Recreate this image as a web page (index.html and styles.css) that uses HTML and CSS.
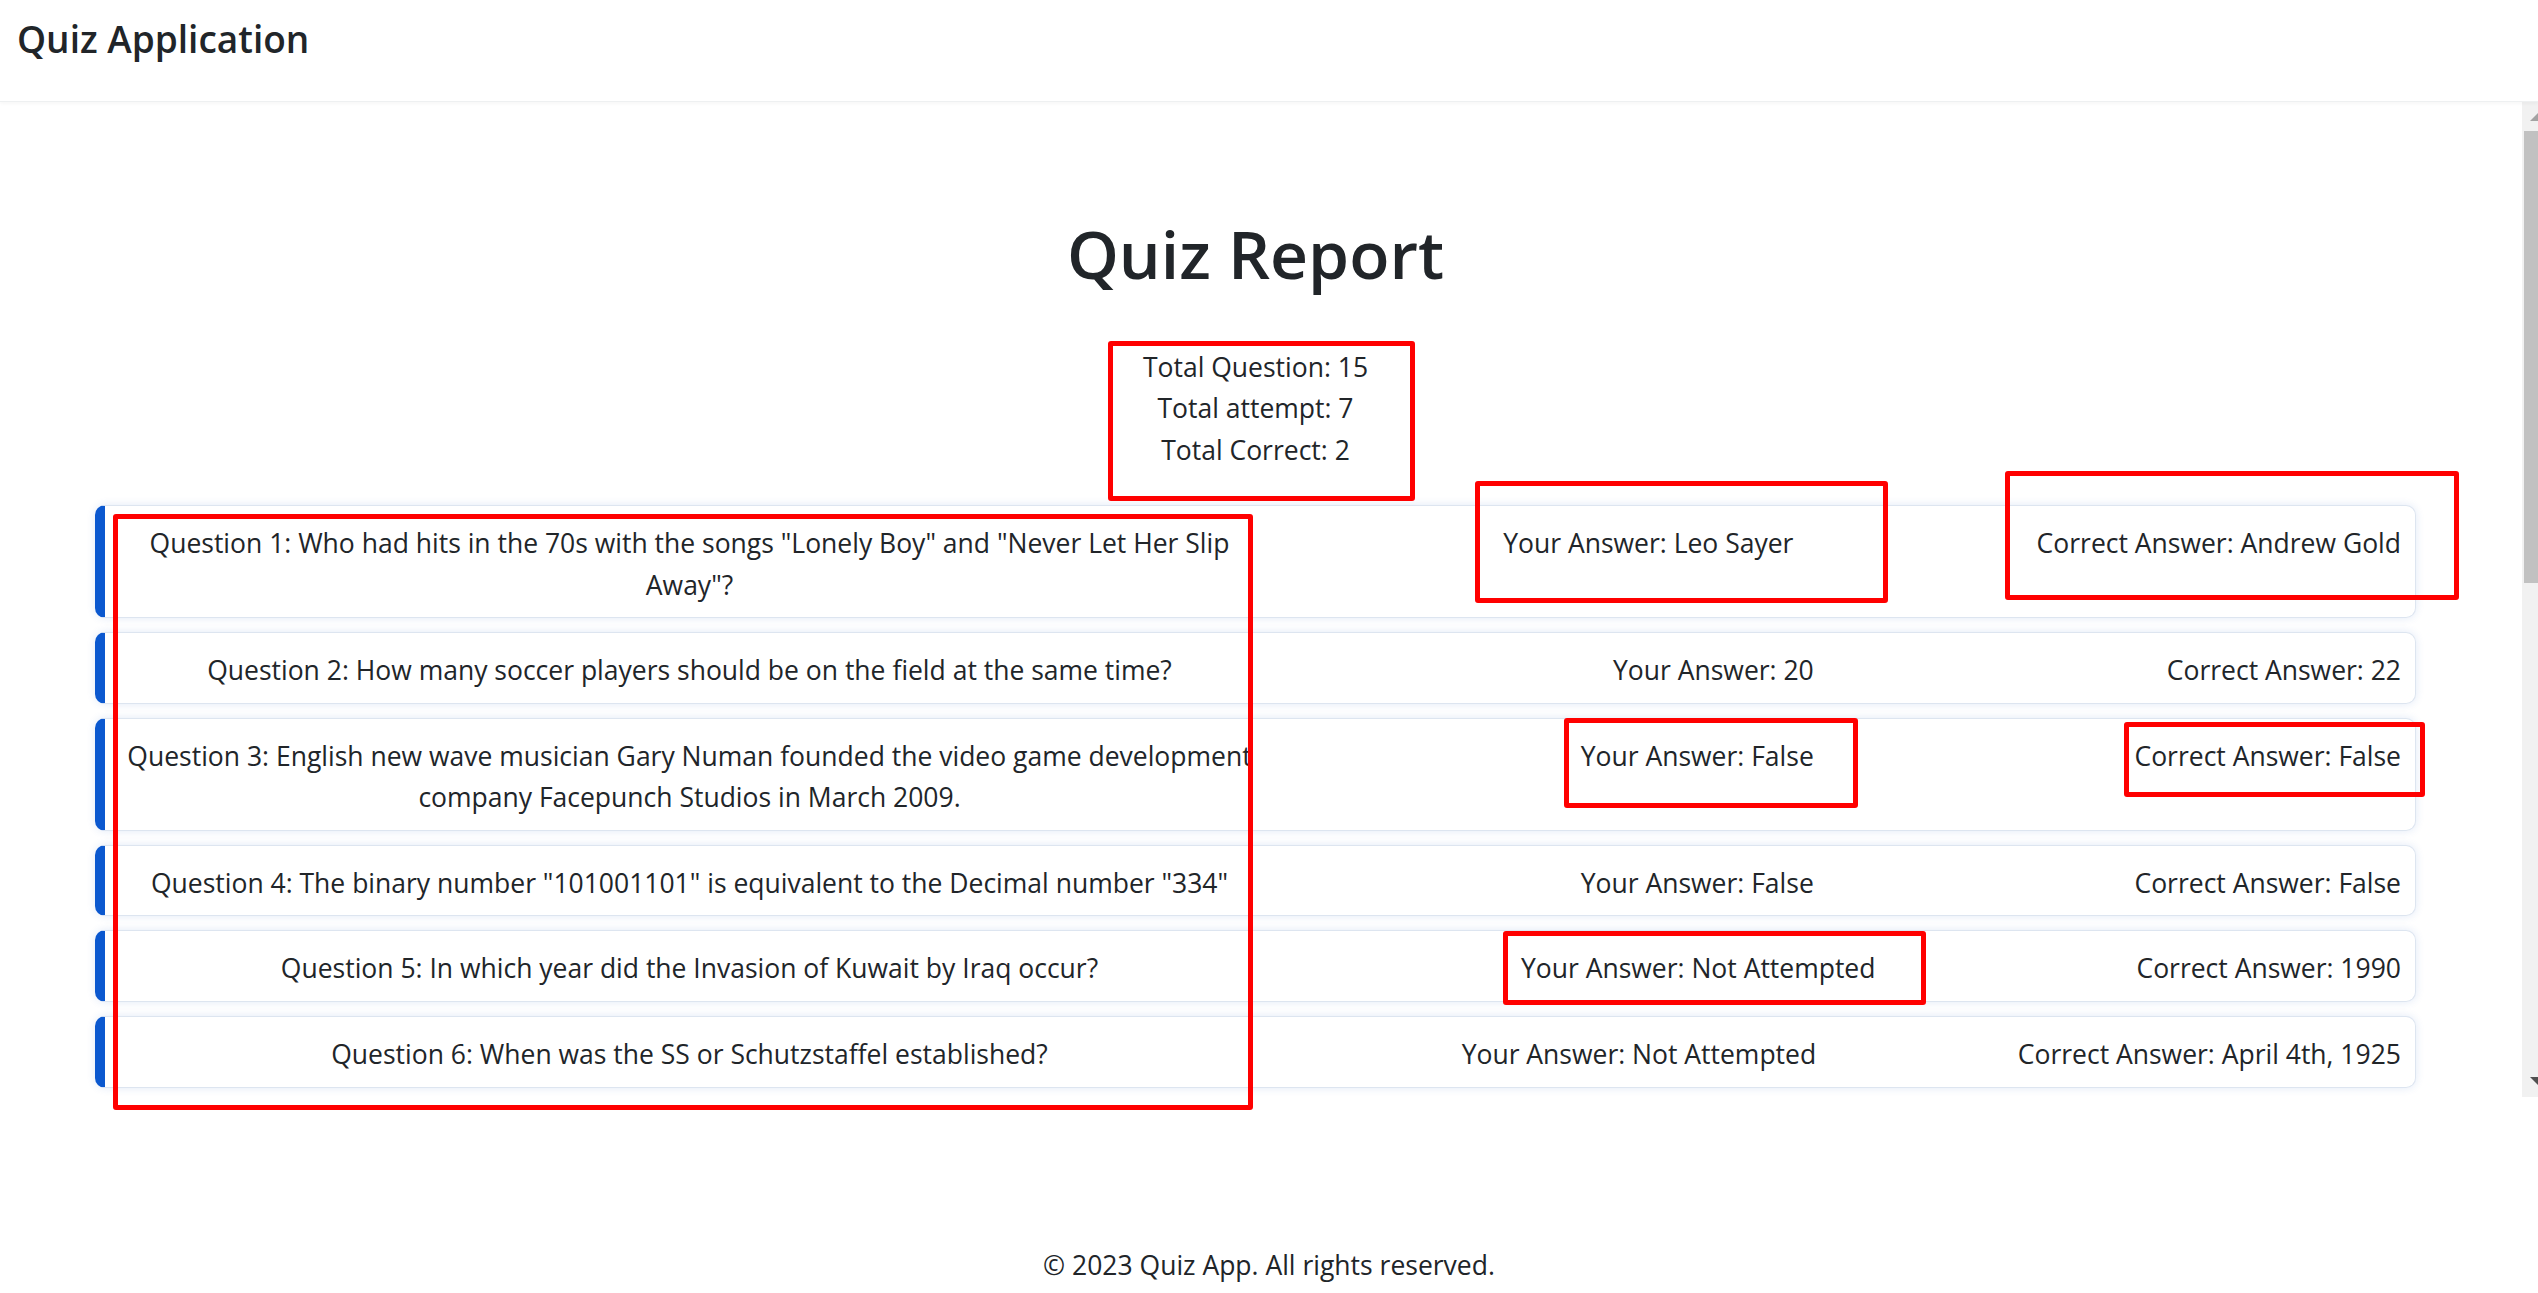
FILE: index.html
```html
<!DOCTYPE html>
<html lang="en">
<head>
<meta charset="utf-8">
<title>Quiz Application</title>
<link rel="stylesheet" href="styles.css">
</head>
<body>
<div class="page">
  <header class="navbar">
    <span class="brand">Quiz Application</span>
  </header>

  <div class="main">
    <div class="scroll">
      <div class="content">
        <h1 class="title">Quiz Report</h1>
        <div class="totals">
          <p>Total Question: 15</p>
          <p>Total attempt: 7</p>
          <p>Total Correct: 2</p>
        </div>

        <div class="list">
          <div class="item">
            <p class="q">Question 1: Who had hits in the 70s with the songs "Lonely Boy" and "Never Let Her Slip Away"?</p>
            <p class="ans">Your Answer: Leo Sayer</p>
            <p class="ans">Correct Answer: Andrew Gold</p>
          </div>
          <div class="item">
            <p class="q">Question 2: How many soccer players should be on the field at the same time?</p>
            <p class="ans">Your Answer: 20</p>
            <p class="ans">Correct Answer: 22</p>
          </div>
          <div class="item">
            <p class="q">Question 3: English new wave musician Gary Numan founded the video game development company Facepunch Studios in March 2009.</p>
            <p class="ans">Your Answer: False</p>
            <p class="ans">Correct Answer: False</p>
          </div>
          <div class="item">
            <p class="q">Question 4: The binary number "101001101" is equivalent to the Decimal number "334"</p>
            <p class="ans">Your Answer: False</p>
            <p class="ans">Correct Answer: False</p>
          </div>
          <div class="item">
            <p class="q">Question 5: In which year did the Invasion of Kuwait by Iraq occur?</p>
            <p class="ans">Your Answer: Not Attempted</p>
            <p class="ans">Correct Answer: 1990</p>
          </div>
          <div class="item">
            <p class="q">Question 6: When was the SS or Schutzstaffel established?</p>
            <p class="ans">Your Answer: Not Attempted</p>
            <p class="ans">Correct Answer: April 4th, 1925</p>
          </div>
        </div>
      </div>
    </div>

    <div class="scrollbar">
      <svg class="sb-arrow" width="16" height="8" viewBox="0 0 16 8"><polygon points="8,8 16,0 16,8" fill="#a3a3a3"/></svg>
      <div class="sb-thumb"></div>
      <div class="sb-space"></div>
      <svg class="sb-arrow" width="16" height="8" viewBox="0 0 16 8"><polygon points="8,0 16,0 16,8" fill="#505050"/></svg>
    </div>
  </div>

  <footer class="footer">© 2023 Quiz App. All rights reserved.</footer>

  <div class="mark mark-totals"></div>
  <div class="mark mark-qcol"></div>
  <div class="mark mark-leo"></div>
  <div class="mark mark-andrew"></div>
  <div class="mark mark-false-y"></div>
  <div class="mark mark-false-c"></div>
  <div class="mark mark-na"></div>
</div>
</body>
</html>
```

FILE: styles.css
```css
* { box-sizing: border-box; }

html, body {
  margin: 0;
  padding: 0;
  background: #ffffff;
}

body {
  font-family: "Open Sans", "Noto Sans", "DejaVu Sans", sans-serif;
  color: #212529;
  font-size: 26.5px;
  line-height: 41.55px;
  overflow: hidden;
}

.page {
  position: relative;
  width: 2538px;
  height: 1293px;
  display: flex;
  flex-direction: column;
  overflow: hidden;
}

/* ---------- navbar ---------- */
.navbar {
  height: 102px;
  flex: 0 0 102px;
  padding: 10px 0 0 17px;
  background: #ffffff;
  border-bottom: 1px solid #eef0f1;
  box-shadow: 0 2px 3px rgba(0, 0, 0, 0.03);
  position: relative;
  z-index: 1;
}

.brand {
  font-size: 37px;
  line-height: 57px;
  font-weight: 600;
  color: #212529;
}

/* ---------- main scroll area ---------- */
.main {
  flex: 0 0 995px;
  height: 995px;
  display: flex;
}

.scroll {
  flex: 1 1 auto;
  overflow: hidden;
}

.content {
  padding: 111px 106px 40px 95px;
}

.title {
  margin: 0;
  text-align: center;
  font-size: 66px;
  line-height: 80px;
  font-weight: 600;
}

.totals {
  margin-top: 53.5px;
  text-align: center;
}

.totals p { margin: 0; }

.list {
  margin-top: 34px;
  display: flex;
  flex-direction: column;
  gap: 14px;
}

.item {
  display: flex;
  justify-content: space-between;
  align-items: flex-start;
  padding: 17px 14px 11px 14px;
  background: #ffffff;
  border: 1px solid #dde5f0;
  border-left: 10px solid #0b58cf;
  border-radius: 10px;
  box-shadow: 0 0 9px rgba(40, 100, 200, 0.14);
}

.item p { margin: 0; }

.q {
  flex: 0 0 50%;
  text-align: center;
}

.ans {
  flex: 0 0 auto;
  white-space: nowrap;
}

/* ---------- fake scrollbar ---------- */
.scrollbar {
  flex: 0 0 16px;
  width: 16px;
  background: #f1f1f1;
  display: flex;
  flex-direction: column;
  padding: 11px 0 12px 0;
}

.sb-arrow { display: block; flex: 0 0 8px; }

.sb-thumb {
  margin-top: 10px;
  margin-left: 2px;
  height: 452px;
  flex: 0 0 452px;
  background: #c1c1c1;
}

.sb-space { flex: 1 1 auto; }

/* ---------- footer ---------- */
.footer {
  flex: 1 1 auto;
  padding-top: 148px;
  text-align: center;
}

/* ---------- red annotation boxes ---------- */
.mark {
  position: absolute;
  border: 5px solid #ff0000;
  border-radius: 3px;
  pointer-events: none;
  z-index: 5;
}

.mark-totals  { left: 1108px; top: 341px; width: 307px; height: 160px; }
.mark-qcol    { left: 113px;  top: 514px; width: 1140px; height: 596px; }
.mark-leo     { left: 1475px; top: 481px; width: 413px; height: 122px; }
.mark-andrew  { left: 2005px; top: 471px; width: 454px; height: 129px; }
.mark-false-y { left: 1564px; top: 718px; width: 294px; height: 90px; }
.mark-false-c { left: 2124px; top: 722px; width: 301px; height: 75px; }
.mark-na      { left: 1503px; top: 931px; width: 423px; height: 74px; }
```
